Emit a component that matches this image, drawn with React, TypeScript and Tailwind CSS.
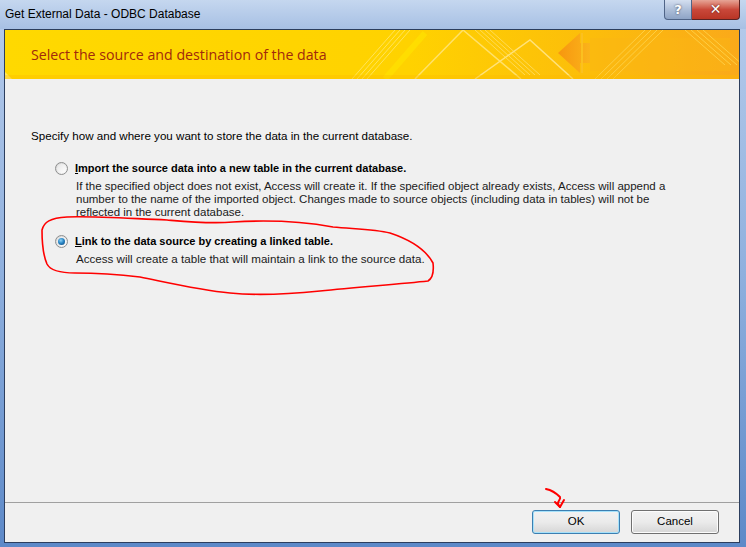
import React from 'react';

const dlgFont = { fontFamily: '"Liberation Sans", Arial, sans-serif' };
const uiFont = { fontFamily: '"Open Sans", "Noto Sans", sans-serif' };

function Radio({ checked }: { checked?: boolean }) {
  return (
    <span className="relative w-[13px] h-[13px] shrink-0 rounded-full border border-[#8e8f8f] bg-gradient-to-br from-[#d4d4d4] to-[#fbfbfb] flex items-center justify-center">
      <span className="w-[9px] h-[9px] rounded-full bg-gradient-to-br from-[#e6e6e6] to-[#ffffff] flex items-center justify-center">
        {checked && (
          <span className="w-[7px] h-[7px] rounded-full bg-[radial-gradient(circle_at_40%_35%,#8fd2f5_0%,#2a87c6_45%,#0d3f72_100%)]" />
        )}
      </span>
    </span>
  );
}

function BannerArt() {
  return (
    <svg className="absolute inset-0 w-full h-full" viewBox="0 0 734 49" preserveAspectRatio="none">
      <defs>
        <linearGradient id="bn" x1="0" x2="1" y1="0" y2="0">
          <stop offset="0" stopColor="#ffd900" />
          <stop offset="0.55" stopColor="#ffd200" />
          <stop offset="0.8" stopColor="#fcbd0b" />
          <stop offset="1" stopColor="#faa91a" />
        </linearGradient>
        <linearGradient id="ar" x1="0" x2="1" y1="0" y2="0">
          <stop offset="0" stopColor="#f7960f" />
          <stop offset="1" stopColor="#fbb31a" />
        </linearGradient>
      </defs>
      <rect width="734" height="49" fill="url(#bn)" />
      <polygon points="0,42 0,49 7,49" fill="#fff2a0" opacity="0.6" />
      {/* left stripe group */}
      <g stroke="#ffe870" strokeWidth="1" opacity="0.8">
        <line x1="347" y1="49" x2="390" y2="0" />
        <line x1="352" y1="49" x2="395" y2="0" />
        <line x1="357" y1="49" x2="400" y2="0" />
        <line x1="362" y1="49" x2="405" y2="0" />
      </g>
      <line x1="380" y1="49" x2="420" y2="3" stroke="#ffe500" strokeWidth="6" opacity="0.6" />
      <polyline points="410,49 458,0 516,49" fill="none" stroke="#ffe16a" strokeWidth="1.5" />
      <g stroke="#ffe06a" strokeWidth="1" opacity="0.8">
        <line x1="470" y1="0" x2="520" y2="45" />
        <line x1="475" y1="0" x2="525" y2="45" />
        <line x1="480" y1="0" x2="530" y2="45" />
        <line x1="485" y1="0" x2="535" y2="45" />
      </g>
      <polyline points="470,49 525,10 568,49" fill="none" stroke="#ffe27a" strokeWidth="1.5" />
      {/* arrow */}
      <polygon points="553,23 575,3 575,13 585,13 585,33 575,33 575,43" fill="url(#ar)" />
      <rect x="576" y="3" width="2" height="40" fill="#fbc020" />
      <rect x="585" y="8" width="140" height="33" fill="#fbb514" opacity="0.45" />
      <g stroke="#ffd24a" strokeWidth="1" opacity="0.9">
        <line x1="590" y1="49" x2="640" y2="0" />
        <line x1="596" y1="49" x2="646" y2="0" />
        <line x1="602" y1="49" x2="652" y2="0" />
        <line x1="608" y1="49" x2="658" y2="0" />
        <line x1="680" y1="0" x2="720" y2="35" />
        <line x1="686" y1="0" x2="726" y2="35" />
        <line x1="692" y1="0" x2="732" y2="35" />
        <line x1="698" y1="0" x2="738" y2="35" />
      </g>
      <rect x="0" y="45" width="734" height="4" fill="#fbb900" opacity="0.35" />
    </svg>
  );
}

export default function App() {
  return (
    <div className="w-[746px] h-[547px] overflow-hidden relative bg-gradient-to-b from-[#b7cceb] via-[#8fb0de] to-[#5d89c8] pt-[29px] pl-[4px] pr-[6px] pb-[4px] flex flex-col">
      {/* Title bar */}
      <div className="absolute top-0 left-0 right-0 h-[29px] bg-gradient-to-b from-[#c5d7ef] to-[#a7c0e4]" />
      <div
        style={dlgFont}
        className="absolute top-[6px] left-[5px] text-[12px] leading-[16px] text-black"
      >
        Get External Data - ODBC Database
      </div>
      <div className="absolute top-0 right-[6px] flex h-[20px]">
        <div className="w-[28px] h-full rounded-bl-[4px] border border-t-0 border-[#4f6487] bg-gradient-to-b from-[#d4dff0] via-[#aebfd9] to-[#8ea4c6] flex items-center justify-center text-white font-bold text-[13px]" style={{ fontFamily: '"DejaVu Sans", sans-serif', textShadow: '0 0 2px #334' }}>
          ?
        </div>
        <div className="w-[48px] h-full rounded-br-[4px] border border-t-0 border-l-0 border-[#5a2323] bg-gradient-to-b from-[#e6a496] via-[#c9483a] to-[#b93525] flex items-center justify-center text-white font-bold text-[14px]" style={{ fontFamily: '"DejaVu Sans", sans-serif', textShadow: '0 0 2px #411' }}>
          ✕
        </div>
      </div>

      {/* Client area */}
      <div className="relative flex-1 flex flex-col border border-[#2c3e5e] bg-[#f0f0f0]">
        <div className="relative h-[49px] shrink-0 overflow-hidden">
          <BannerArt />
          <div
            style={uiFont}
            className="relative pl-[26px] pt-[15px] text-[14.2px] leading-[20px] text-[#a1290c]"
          >
            Select the source and destination of the data
          </div>
        </div>

        <div style={dlgFont} className="flex-1 text-[11.6px] leading-[13px] text-black pl-[26px] pt-[50px]">
          <p>Specify how and where you want to store the data in the current database.</p>

          <div className="mt-[20px] pl-[24px]">
            <div className="flex items-center gap-[7px]">
              <Radio />
              <span className="font-bold text-[11px]">
                <span className="underline">I</span>mport the source data into a new table in the current database.
              </span>
            </div>
            <div className="pl-[21px] mt-[5px] text-[11.5px] text-[#1a1a1a]">
              <div>If the specified object does not exist, Access will create it. If the specified object already exists, Access will append a</div>
              <div>number to the name of the imported object. Changes made to source objects (including data in tables) will not be</div>
              <div>reflected in the current database.</div>
            </div>

            <div className="flex items-center gap-[7px] mt-[16px]">
              <Radio checked />
              <span className="font-bold text-[11px]">
                <span className="underline">L</span>ink to the data source by creating a linked table.
              </span>
            </div>
            <div className="pl-[21px] mt-[4px] text-[#1a1a1a]">
              Access will create a table that will maintain a link to the source data.
            </div>
          </div>
        </div>

        <div className="h-px bg-[#a0a0a0] shrink-0" />
        <div style={dlgFont} className="h-[39px] shrink-0 flex justify-end items-start gap-[11px] pt-[7px] pr-[20px] text-[11.5px]">
          <button className="w-[88px] h-[24px] rounded-[3px] border border-[#3c7fb1] shadow-[inset_0_0_0_1px_#a6e1fa] bg-gradient-to-b from-[#f2f2f2] via-[#ebebeb] to-[#d6d6d6] text-black">
            OK
          </button>
          <button className="w-[88px] h-[24px] rounded-[3px] border border-[#707070] shadow-[inset_0_0_0_1px_#fcfcfc] bg-gradient-to-b from-[#f2f2f2] via-[#ebebeb] to-[#d6d6d6] text-black">
            Cancel
          </button>
        </div>
      </div>

      {/* red hand-drawn annotations */}
      <svg className="absolute inset-0 pointer-events-none" width="746" height="547" viewBox="0 0 746 547">
        <path
          d="M42,230 C44,222 50,218 67,217 C90,216 120,218 167,220 C190,222 210,224 233,222 C265,220 300,221 333,227 C355,229 375,229 390,233 C408,239 425,248 433,263 C434,272 433,278 428,281 C400,284 360,287 320,291 C290,294 260,296 230,293 C200,290 170,283 140,277 C115,274 95,273 75,273 C58,273 50,270 47,264 C43,255 42,242 42,230"
          fill="none"
          stroke="#ff0000"
          strokeWidth="1.6"
          strokeLinecap="round"
        />
        <path
          d="M546,489 C551,490 556,493 560,497 C561,499 558,501 558,503 C558,505 559,506 560,507"
          fill="none"
          stroke="#ff0000"
          strokeWidth="2"
          strokeLinecap="round"
        />
        <path d="M555,502 L560,507 L564,500" fill="none" stroke="#ff0000" strokeWidth="2" strokeLinecap="round" strokeLinejoin="round" />
      </svg>
    </div>
  );
}
